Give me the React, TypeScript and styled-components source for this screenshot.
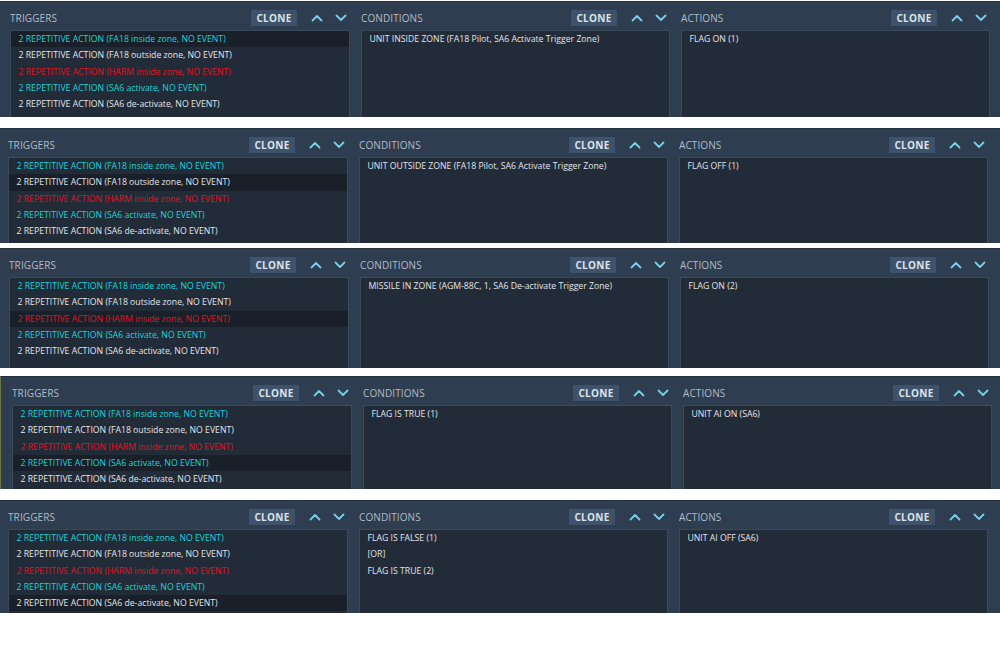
import styled, { createGlobalStyle } from 'styled-components';

type Row = { text: string; tone?: 'cyan' | 'red' | 'white' };

type PanelData = {
  gap: number;
  height: number;
  shift: number;
  selected: number;
  edge?: boolean;
  conditions: string[];
  actions: string[];
};

const triggers: Row[] = [
  { text: '2 REPETITIVE ACTION (FA18 inside zone, NO EVENT)', tone: 'cyan' },
  { text: '2 REPETITIVE ACTION (FA18 outside zone, NO EVENT)', tone: 'white' },
  { text: '2 REPETITIVE ACTION (HARM inside zone, NO EVENT)', tone: 'red' },
  { text: '2 REPETITIVE ACTION (SA6 activate, NO EVENT)', tone: 'cyan' },
  { text: '2 REPETITIVE ACTION (SA6 de-activate, NO EVENT)', tone: 'white' },
];

const panels: PanelData[] = [
  {
    gap: 1,
    height: 116,
    shift: 0,
    selected: 0,
    conditions: ['UNIT INSIDE ZONE (FA18 Pilot, SA6 Activate Trigger Zone)'],
    actions: ['FLAG ON (1)'],
  },
  {
    gap: 11,
    height: 115,
    shift: -2,
    selected: 1,
    conditions: ['UNIT OUTSIDE ZONE (FA18 Pilot, SA6 Activate Trigger Zone)'],
    actions: ['FLAG OFF (1)'],
  },
  {
    gap: 5,
    height: 120,
    shift: -1,
    selected: 2,
    conditions: ['MISSILE IN ZONE (AGM-88C, 1, SA6 De-activate Trigger Zone)'],
    actions: ['FLAG ON (2)'],
  },
  {
    gap: 8,
    height: 113,
    shift: 1,
    selected: 3,
    edge: true,
    conditions: ['FLAG IS TRUE (1)'],
    actions: ['UNIT AI ON (SA6)'],
  },
  {
    gap: 11,
    height: 113,
    shift: -2,
    selected: 4,
    conditions: ['FLAG IS FALSE (1)', '[OR]', 'FLAG IS TRUE (2)'],
    actions: ['UNIT AI OFF (SA6)'],
  },
];

const toneColors = {
  cyan: '#1dd2d8',
  red: '#e3121b',
  white: '#e2e5e9',
};

function Chevron({ down }: { down?: boolean }) {
  return (
    <svg width="12" height="8" viewBox="0 0 12 8">
      <polyline
        points={down ? '1.5,1.5 6,6 10.5,1.5' : '1.5,6.5 6,2 10.5,6.5'}
        fill="none"
        stroke="#79cdea"
        strokeWidth="1.8"
        strokeLinecap="round"
        strokeLinejoin="round"
      />
    </svg>
  );
}

function Section({ title, rows, selected }: { title: string; rows: Row[]; selected?: number }) {
  return (
    <Column>
      <Header>
        <Title>{title}</Title>
        <CloneButton>CLONE</CloneButton>
        <Arrows>
          <Chevron />
          <Chevron down />
        </Arrows>
      </Header>
      <ListBox>
        {rows.map((row, i) => (
          <ListRow key={i} active={i === selected} tone={row.tone ?? 'white'}>
            {row.text}
          </ListRow>
        ))}
      </ListBox>
    </Column>
  );
}

function App() {
  return (
    <>
      <GlobalStyle />
      <Page>
        {panels.map((p, i) => (
          <Panel key={i} gap={p.gap} height={p.height} shift={p.shift} edge={p.edge}>
            <Section title="TRIGGERS" rows={triggers} selected={p.selected} />
            <Section title="CONDITIONS" rows={p.conditions.map((text) => ({ text }))} />
            <Section title="ACTIONS" rows={p.actions.map((text) => ({ text }))} />
          </Panel>
        ))}
      </Page>
    </>
  );
}

export default App;

const GlobalStyle = createGlobalStyle`
  html, body {
    margin: 0;
    padding: 0;
    background: #ffffff;
  }
  body {
    font-family: "Open Sans", "DejaVu Sans", sans-serif;
  }
`;

const Page = styled.div`
  width: 1000px;
  height: 648px;
  display: flex;
  flex-direction: column;
  background: #ffffff;
  overflow: hidden;
`;

const Panel = styled.div<{ gap: number; height: number; shift: number; edge?: boolean }>`
  flex: none;
  margin-top: ${({ gap }) => gap}px;
  height: ${({ height }) => height}px;
  display: grid;
  grid-template-columns: 340px 309px 309px;
  column-gap: 11px;
  padding: 0 0 0 ${({ shift }) => 10 + shift}px;
  background: #2e3d50;
  border-top: 1px solid #243141;
  border-left: ${({ edge }) => (edge ? '1px solid #6d7445' : 'none')};
  box-sizing: border-box;
  overflow: hidden;
`;

const Column = styled.div`
  display: flex;
  flex-direction: column;
  min-width: 0;
`;

const Header = styled.div`
  height: 24px;
  padding-top: 4px;
  display: flex;
  align-items: center;
  flex: none;
`;

const Title = styled.div`
  font-size: 10px;
  color: #b3bbc5;
  letter-spacing: 0.1px;
`;

const CloneButton = styled.div`
  margin-left: auto;
  width: 46px;
  height: 16px;
  display: flex;
  align-items: center;
  justify-content: center;
  background: #3e536b;
  color: #dde2e8;
  font-size: 10px;
  font-weight: 700;
  letter-spacing: 0.3px;
  border-radius: 1px;
`;

const Arrows = styled.div`
  display: flex;
  align-items: center;
  gap: 12px;
  margin-left: 14px;
  padding-right: 3px;
`;

const ListBox = styled.div`
  flex: 1;
  background: #222b38;
  border: 1px solid #3a4a5d;
  border-bottom: none;
  min-height: 0;
`;

const ListRow = styled.div<{ active?: boolean; tone: 'cyan' | 'red' | 'white' }>`
  height: 16.25px;
  line-height: 16.25px;
  padding-left: 7.5px;
  font-size: 8.7px;
  white-space: nowrap;
  color: ${({ tone }) => toneColors[tone]};
  background: ${({ active }) => (active ? '#19202a' : 'transparent')};
`;
